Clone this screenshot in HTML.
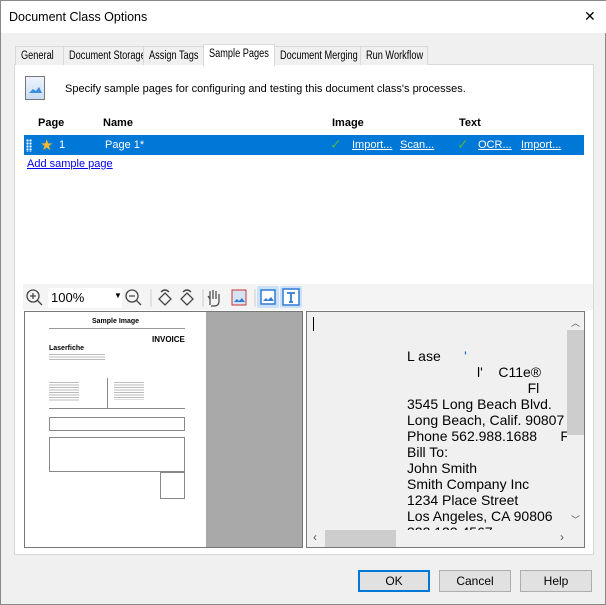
<!DOCTYPE html><html><head><style>
*{box-sizing:border-box;margin:0;padding:0}
body{width:606px;height:605px;background:#f0f0f0;font-family:"Liberation Sans",sans-serif;font-size:11px;color:#000;position:relative;overflow:hidden;border:1px solid #888}
.a{position:absolute}
.tab{position:absolute;top:45px;height:19px;border:1px solid #d9d9d9;border-bottom:none;background:#f0f0f0;padding:3px 0 0 5px;white-space:nowrap;overflow:hidden}
.tab span{display:inline-block;font-size:11.5px;transform:scaleX(0.8);transform-origin:0 0}
a{color:#0000ee;text-decoration:underline}
.btn{position:absolute;top:569px;width:72px;height:22px;background:#e1e1e1;border:1px solid #adadad;text-align:center;line-height:20px;font-size:12px}
.hl a,.hl{color:#fff}
.tx{position:absolute;left:100px;font-size:14px;line-height:16px;white-space:pre;color:#000}
</style></head><body>
<div class="a" style="left:0;top:0;width:606px;height:32px;background:#fff"></div>
<div class="a" style="left:8px;top:9px;font-size:12.5px">Document Class Options</div>
<div class="a" style="left:583px;top:7px;font-size:14px">✕</div>
<div class="a" style="left:13px;top:63px;width:580px;height:491px;background:#fff;border:1px solid #d9d9d9"></div>
<div class="tab" style="left:14px;width:49px"><span>General</span></div>
<div class="tab" style="left:62px;width:81px"><span>Document Storage</span></div>
<div class="tab" style="left:142px;width:61px"><span>Assign Tags</span></div>
<div class="tab" style="left:202px;top:43px;height:22px;width:72px;background:#fff"><span>Sample Pages</span></div>
<div class="tab" style="left:273px;width:87px"><span>Document Merging</span></div>
<div class="tab" style="left:359px;width:68px"><span>Run Workflow</span></div>
<div class="a" style="left:24px;top:75px;width:20px;height:24px;border:1px solid #777;background:linear-gradient(#eef4fb,#c9ddf4)"><svg width="18" height="22"><path d="M3 16 L7 12 L10 14 L13 10 L16 16Z" fill="#3b8ee0"/></svg></div>
<div class="a" style="left:64px;top:82px">Specify sample pages for configuring and testing this document class's processes.</div>
<div class="a" style="left:37px;top:116px;font-weight:bold">Page</div>
<div class="a" style="left:102px;top:116px;font-weight:bold">Name</div>
<div class="a" style="left:331px;top:116px;font-weight:bold">Image</div>
<div class="a" style="left:458px;top:116px;font-weight:bold">Text</div>
<div class="a hl" style="left:23px;top:134px;width:560px;height:20px;background:#0078d7">
<div class="a" style="left:2px;top:4px;width:6px;height:13px;background:radial-gradient(circle,#fff 1px,transparent 1.3px) 0 0/3px 3px"></div>
<div class="a" style="left:16px;top:1px;font-size:15px;color:#f5b82e">★</div>
<div class="a" style="left:35px;top:4px">1</div>
<div class="a" style="left:81px;top:4px">Page 1*</div>
<div class="a" style="left:306px;top:1px;color:#4caf50;font-size:14px">✓</div>
<div class="a" style="left:328px;top:4px"><a>Import...</a></div>
<div class="a" style="left:376px;top:4px"><a>Scan...</a></div>
<div class="a" style="left:433px;top:1px;color:#4caf50;font-size:14px">✓</div>
<div class="a" style="left:454px;top:4px"><a>OCR...</a></div>
<div class="a" style="left:497px;top:4px"><a>Import...</a></div>
</div>
<div class="a" style="left:26px;top:157px"><a>Add sample page</a></div>
<div class="a" style="left:22px;top:283px;width:570px;height:26px;background:#f4f4f4"></div>
<svg class="a" style="left:24px;top:287px" width="280" height="20">
<circle cx="8" cy="8" r="6" fill="none" stroke="#444" stroke-width="1.3"/><path d="M12 12l5 5M5 8h6M8 5v6" stroke="#444" stroke-width="1.3"/>
<circle cx="107" cy="8" r="6" fill="none" stroke="#444" stroke-width="1.3"/><path d="M111 12l5 5M104 8h6" stroke="#444" stroke-width="1.3"/>
<path d="M126 1v18M178 1v18M230 1v18" stroke="#ccc"/>
<path d="M140 5l6 6-6 6-6-6z M136 4q4-4 8 0" fill="none" stroke="#444" stroke-width="1.3"/>
<path d="M162 5l6 6-6 6-6-6z M158 4q4-4 8 0" fill="none" stroke="#444" stroke-width="1.3"/>
<path d="M185 17v-6l-2-3m2 3v-8m3 8v-9m3 9v-8m3 8v-5v7q0 5-5 5h-3" fill="none" stroke="#444" stroke-width="1.2"/>
<rect x="207" y="2" width="14" height="15" fill="#d5e4f5" stroke="#c33"/><path d="M209 14l3-3 2 2 3-3 3 4z" fill="#2e7bd6"/>
</svg>
<div class="a" style="left:47px;top:287px;width:74px;height:20px;background:#fff;font-size:13px;padding:2px 0 0 3px">100%<span style="position:absolute;left:66px;top:3px;font-size:8px">▼</span></div>
<div class="a" style="left:256px;top:285px;width:22px;height:22px;background:#cce0f7;border-radius:2px"><svg width="22" height="22"><rect x="4" y="4" width="14" height="14" fill="#fff" stroke="#2e7bd6" stroke-width="1.5"/><path d="M6 15l3-3 2 2 3-3 3 4z" fill="#2e7bd6"/></svg></div>
<div class="a" style="left:279px;top:285px;width:22px;height:22px;background:#cce0f7;border-radius:2px"><svg width="22" height="22"><rect x="3" y="3" width="16" height="16" fill="#fff" stroke="#2e7bd6" stroke-width="1.5"/><path d="M7 7h8M11 7v9M9 16h4" stroke="#2e7bd6" stroke-width="1.8" fill="none"/></svg></div>
<div class="a" style="left:23px;top:310px;width:279px;height:237px;border:1px solid #777;background:#a9a9a9;overflow:hidden">
<div class="a" style="left:0;top:0;width:181px;height:237px;background:#fff">
<div class="a" style="left:67px;top:6px;font-size:7px;font-weight:bold">Sample Image</div>
<div class="a" style="left:24px;top:16px;width:136px;height:1px;background:#999"></div>
<div class="a" style="left:127px;top:23px;font-size:8px;font-weight:bold">INVOICE</div>
<div class="a" style="left:24px;top:33px;font-size:7px;font-weight:bold">Laserfiche</div>
<div class="a" style="left:24px;top:42px;width:56px;height:7px;background:repeating-linear-gradient(#bbb 0 1px,#fff 1px 2.5px)"></div>
<div class="a" style="left:24px;top:70px;width:30px;height:20px;background:repeating-linear-gradient(#bbb 0 1px,#fff 1px 2.5px)"></div>
<div class="a" style="left:89px;top:70px;width:30px;height:18px;background:repeating-linear-gradient(#bbb 0 1px,#fff 1px 2.5px)"></div>
<div class="a" style="left:82px;top:66px;width:1px;height:30px;background:#888"></div>
<div class="a" style="left:24px;top:96px;width:136px;height:1px;background:#888"></div>
<div class="a" style="left:24px;top:105px;width:136px;height:14px;border:1px solid #888"></div>
<div class="a" style="left:24px;top:125px;width:136px;height:35px;border:1px solid #888"></div>
<div class="a" style="left:135px;top:160px;width:25px;height:27px;border:1px solid #888"></div>
</div></div>
<div class="a" style="left:305px;top:310px;width:279px;height:237px;border:1px solid #777;background:#f0f0f0;overflow:hidden">
<div class="a" style="left:6px;top:5px;width:1px;height:14px;background:#000"></div>
<div class="tx" style="top:36px">L ase      <span style="color:#06c">'</span></div>
<div class="tx" style="top:52px">                  l'    C11e®</div>
<div class="tx" style="top:68px">                               Fl</div>
<div class="tx" style="top:84px">3545 Long Beach Blvd.</div>
<div class="tx" style="top:100px">Long Beach, Calif. 90807</div>
<div class="tx" style="top:116px">Phone 562.988.1688      Fa</div>
<div class="tx" style="top:132px">Bill To:</div>
<div class="tx" style="top:148px">John Smith</div>
<div class="tx" style="top:164px">Smith Company Inc</div>
<div class="tx" style="top:180px">1234 Place Street</div>
<div class="tx" style="top:196px">Los Angeles, CA 90806</div>
<div class="tx" style="top:212px">323.123.4567</div>
<div class="a" style="left:260px;top:1px;width:17px;height:217px;background:#f0f0f0;font-size:9px;text-align:center;color:#555">
<div style="padding-top:3px">︿</div>
<div class="a" style="left:0;top:17px;width:17px;height:105px;background:#cdcdcd"></div>
<div class="a" style="left:0;top:200px;width:17px">﹀</div></div>
<div class="a" style="left:1px;top:218px;width:276px;height:17px;background:#f0f0f0;font-size:12px;color:#555">
<span class="a" style="left:5px;top:0">‹</span>
<div class="a" style="left:17px;top:0;width:71px;height:17px;background:#cdcdcd"></div>
<span class="a" style="left:252px;top:0">›</span></div>
</div>
<div class="btn" style="left:357px;border:2px solid #0078d7;line-height:18px">OK</div>
<div class="btn" style="left:438px">Cancel</div>
<div class="btn" style="left:519px">Help</div>
</body></html>
